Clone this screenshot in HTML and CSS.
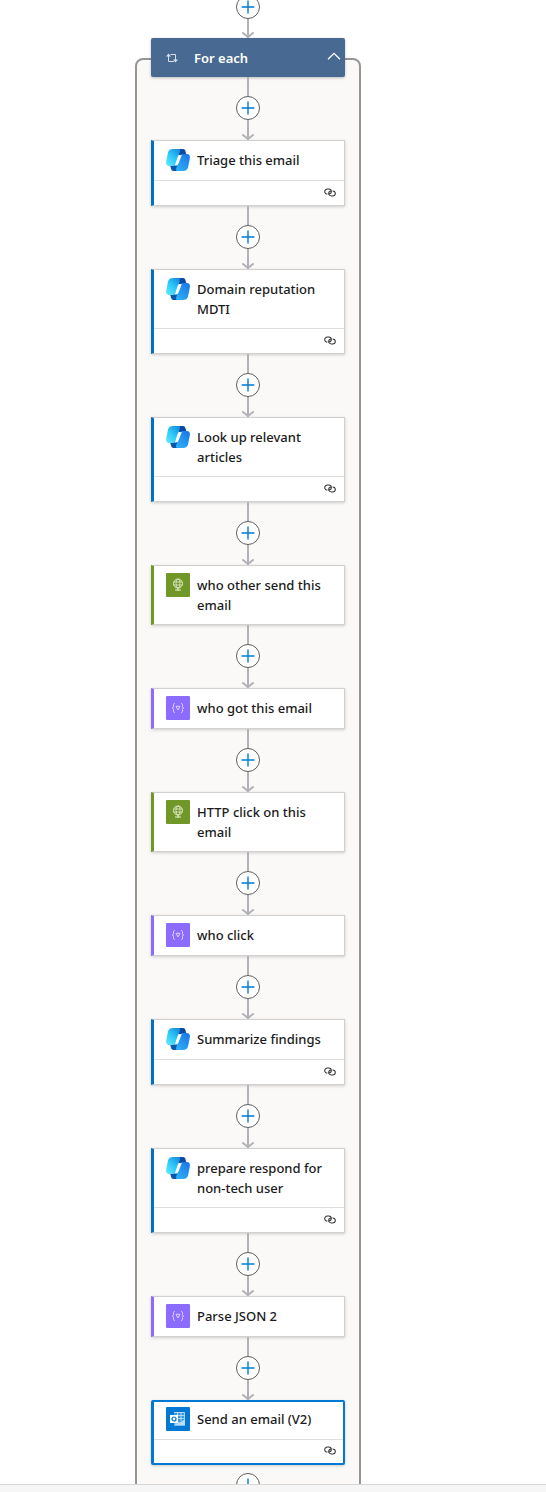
FILE: index.html
```html
<!DOCTYPE html>
<html lang="en">
<head>
<meta charset="utf-8">
<meta name="viewport" content="width=device-width, initial-scale=1">
<title>Workflow designer</title>
<link rel="stylesheet" href="styles.css">
</head>
<body>
<svg class="sprite" aria-hidden="true">
  <defs>
    <linearGradient id="cyan" x1="0" y1="1" x2=".8" y2="0"><stop offset="0" stop-color="#6be8fa"/><stop offset=".5" stop-color="#2fcdf9"/><stop offset="1" stop-color="#1590e0"/></linearGradient>
    <linearGradient id="azure" x1="0" y1="1" x2=".8" y2="0"><stop offset="0" stop-color="#2fb5f8"/><stop offset="1" stop-color="#1b78e8"/></linearGradient>
    <symbol id="plus" viewBox="0 0 24 24"><path d="M12 5v14M5 12h14" stroke="#0078d4" stroke-width="1.5" fill="none"/></symbol>
    <symbol id="arrow" viewBox="0 0 12 6"><path d="M1 1l5 4 5-4" stroke="#b1b1b7" stroke-width="2" fill="none" stroke-linecap="round" stroke-linejoin="round"/></symbol>
    <symbol id="copilot" viewBox="0 0 24 24">
      <path d="M8 1h9c1.400 0 2 .7 2.400 2L20.500 7H13z" fill="#0b48a0"/>
      <path d="M16 23H7.500c-1.400 0-2-.7-2.400-2L4 17h7z" fill="#0b57ab"/>
      <path d="M7 1h5.500c1.400 0 1.700 1 1.400 2.200L10.400 15c-.5 1.800-1.300 3-3.300 3H3C.5 18-.3 16 .2 13.500L2 4.500C2.600 2 4.500 1 7 1z" fill="url(#cyan)"/>
      <path d="M17 23h-5.500c-1.400 0-1.700-1-1.400-2.200L13.600 9c.5-1.800 1.300-3 3.300-3H21c2.500 0 3.300 2 2.800 4.500L22 19.500C21.400 22 19.500 23 17 23z" fill="url(#azure)"/>
      <path d="M15.800 7c-2.600 0-3.900.6-4.500 2.700L8.900 17.500c2.100 0 3.200-.8 3.900-2.800z" fill="#fff"/>
    </symbol>
    <symbol id="http" viewBox="0 0 24 24">
      <rect width="24" height="24" rx="1" fill="#709727"/>
      <g stroke="#e3edcf" fill="none"><circle cx="12" cy="10.500" r="4.500"/><ellipse cx="12" cy="10.500" rx="2" ry="4.500" stroke-width=".8"/><path d="M8 9h8M8 12h8" stroke-width=".8"/><path d="M12 15v3M9 17h6"/></g>
    </symbol>
    <symbol id="json" viewBox="0 0 24 24">
      <rect width="24" height="24" rx="1" fill="#8c6cff"/>
      <path d="M9 7.500c-1.300 0-1.500.5-1.500 1.500v1.500c0 1-.4 1.500-1.200 1.500.8 0 1.200.5 1.200 1.500V15c0 1 .2 1.500 1.500 1.500M15 7.500c1.300 0 1.500.5 1.500 1.500v1.500c0 1 .4 1.500 1.200 1.500-.8 0-1.200.5-1.200 1.500V15c0 1-.2 1.500-1.500 1.500M10 10.300h4L12 14z" stroke="#ddd3ff" fill="none"/>
    </symbol>
    <symbol id="outlook" viewBox="0 0 24 24">
      <rect width="24" height="24" rx="1" fill="#0078d4"/>
      <path d="M8 5h11v10H8z" fill="#3b98e0"/>
      <path d="M8 5.500h10.500V14M8 8.500h10M9 11.500h9M11.500 5v9M15 5v9" stroke="#cbe6fa" stroke-width=".8" fill="none"/>
      <path d="M9 12.500l5 3 5-3V18.500H8z" fill="#8cc8f5"/>
      <path d="M8 18.500l11-6v6z" fill="#b9defa"/>
      <rect x="4" y="8" width="8" height="8" fill="#fff"/><circle cx="8" cy="12" r="2" stroke="#0078d4" stroke-width="1.200" fill="none"/>
    </symbol>
    <symbol id="link" viewBox="0 0 14 10">
      <g stroke="#333" fill="none" stroke-width="1.200"><path d="M4 6.800C2 6.800.8 5.500.8 3.900S2.200 1 4 1h1.500c1.800 0 3 1.200 3 2.800 0 1.700-1.100 2.900-3 3"/><path d="M10 3.200c2 0 3.200 1.300 3.200 2.900S11.800 9 10 9H8.500c-1.800 0-3-1.200-3-2.800 0-1.700 1.100-2.900 3-3"/></g>
    </symbol>
    <symbol id="loop" viewBox="0 0 12 10">
      <path d="M2.500 3v5.500H8M4.500 1.500h5V7" stroke="#d5deea" fill="none"/><path d="M0 3.500L2.500.5 5 3.500zM7 6.500h5L9.500 9.500z" fill="#d5deea"/>
    </symbol>
    <symbol id="chevron" viewBox="0 0 14 8"><path d="M1 7.300l6-6 6 6" stroke="#fff" stroke-width="1.300" fill="none"/></symbol>
  </defs>
</svg>

<div class="designer">
  <main class="canvas">
    <div class="edge edge-entry"><button class="add" aria-label="Insert a new step"><svg><use href="#plus"/></svg></button><svg class="arrow"><use href="#arrow"/></svg></div>
    <section class="scope">
      <header class="scope-header">
        <svg class="scope-icon"><use href="#loop"/></svg>
        <h1 class="scope-title">For each</h1>
        <button class="collapse" aria-label="Collapse"><svg><use href="#chevron"/></svg></button>
      </header>
      <div class="edge"><button class="add" aria-label="Insert a new step"><svg><use href="#plus"/></svg></button><svg class="arrow"><use href="#arrow"/></svg></div>

      <article class="card blue">
        <div class="card-main"><svg class="icon"><use href="#copilot"/></svg><h2 class="title">Triage this email</h2></div>
        <div class="card-foot"><svg class="link"><use href="#link"/></svg></div>
      </article>
      <div class="edge"><button class="add" aria-label="Insert a new step"><svg><use href="#plus"/></svg></button><svg class="arrow"><use href="#arrow"/></svg></div>

      <article class="card blue">
        <div class="card-main"><svg class="icon"><use href="#copilot"/></svg><h2 class="title">Domain reputation MDTI</h2></div>
        <div class="card-foot"><svg class="link"><use href="#link"/></svg></div>
      </article>
      <div class="edge"><button class="add" aria-label="Insert a new step"><svg><use href="#plus"/></svg></button><svg class="arrow"><use href="#arrow"/></svg></div>

      <article class="card blue">
        <div class="card-main"><svg class="icon"><use href="#copilot"/></svg><h2 class="title">Look up relevant articles</h2></div>
        <div class="card-foot"><svg class="link"><use href="#link"/></svg></div>
      </article>
      <div class="edge"><button class="add" aria-label="Insert a new step"><svg><use href="#plus"/></svg></button><svg class="arrow"><use href="#arrow"/></svg></div>

      <article class="card green">
        <div class="card-main"><svg class="icon"><use href="#http"/></svg><h2 class="title">who other send this email</h2></div>
      </article>
      <div class="edge"><button class="add" aria-label="Insert a new step"><svg><use href="#plus"/></svg></button><svg class="arrow"><use href="#arrow"/></svg></div>

      <article class="card purple">
        <div class="card-main"><svg class="icon"><use href="#json"/></svg><h2 class="title">who got this email</h2></div>
      </article>
      <div class="edge"><button class="add" aria-label="Insert a new step"><svg><use href="#plus"/></svg></button><svg class="arrow"><use href="#arrow"/></svg></div>

      <article class="card green">
        <div class="card-main"><svg class="icon"><use href="#http"/></svg><h2 class="title">HTTP click on this email</h2></div>
      </article>
      <div class="edge"><button class="add" aria-label="Insert a new step"><svg><use href="#plus"/></svg></button><svg class="arrow"><use href="#arrow"/></svg></div>

      <article class="card purple">
        <div class="card-main"><svg class="icon"><use href="#json"/></svg><h2 class="title">who click</h2></div>
      </article>
      <div class="edge"><button class="add" aria-label="Insert a new step"><svg><use href="#plus"/></svg></button><svg class="arrow"><use href="#arrow"/></svg></div>

      <article class="card blue">
        <div class="card-main"><svg class="icon"><use href="#copilot"/></svg><h2 class="title">Summarize findings</h2></div>
        <div class="card-foot"><svg class="link"><use href="#link"/></svg></div>
      </article>
      <div class="edge"><button class="add" aria-label="Insert a new step"><svg><use href="#plus"/></svg></button><svg class="arrow"><use href="#arrow"/></svg></div>

      <article class="card blue">
        <div class="card-main"><svg class="icon"><use href="#copilot"/></svg><h2 class="title">prepare respond for non-tech user</h2></div>
        <div class="card-foot"><svg class="link"><use href="#link"/></svg></div>
      </article>
      <div class="edge"><button class="add" aria-label="Insert a new step"><svg><use href="#plus"/></svg></button><svg class="arrow"><use href="#arrow"/></svg></div>

      <article class="card purple">
        <div class="card-main"><svg class="icon"><use href="#json"/></svg><h2 class="title">Parse JSON 2</h2></div>
      </article>
      <div class="edge"><button class="add" aria-label="Insert a new step"><svg><use href="#plus"/></svg></button><svg class="arrow"><use href="#arrow"/></svg></div>

      <article class="card selected">
        <div class="card-main"><svg class="icon"><use href="#outlook"/></svg><h2 class="title">Send an email (V2)</h2></div>
        <div class="card-foot"><svg class="link"><use href="#link"/></svg></div>
      </article>
      <div class="edge edge-exit"><button class="add" aria-label="Insert a new step"><svg><use href="#plus"/></svg></button></div>
    </section>
  </main>
  <footer class="status"></footer>
</div>
</body>
</html>
```
FILE: styles.css
```css
* { box-sizing: border-box; }
body {
  margin: 0;
  background: #fff;
  color: #1b1b1b;
  font-family: "Noto Sans", "Open Sans", sans-serif;
  font-size: 13px;
  line-height: 20px;
}
svg { display: block; }
h1, h2 { margin: 0; font-size: 13px; }
button { padding: 0; border: 0; background: none; cursor: pointer; }
.sprite { position: absolute; width: 0; height: 0; }

.designer { display: flex; flex-direction: column; height: 100vh; }
.canvas { flex: 1; min-height: 0; overflow: hidden; padding: 0 185px 0 135px; }
.status { flex: none; height: 8px; background: #f6f6f6; border-top: 1px solid #d8d8d8; }

.scope {
  margin-top: 20px;
  padding: 0 14px 40px;
  border: 2px solid #979593;
  border-radius: 8px;
  background: #faf9f8;
}
.scope-header {
  display: flex;
  align-items: center;
  height: 39px;
  margin-top: -22px;
  padding: 0 4px 0 15px;
  border-radius: 2px;
  background: #486991;
  color: #fff;
  box-shadow: 0 1px 3px rgba(0, 0, 0, .25);
}
.scope-icon { width: 12px; height: 10px; }
.scope-title { flex: 1; margin-left: 16px; font-weight: 600; }
.collapse svg { width: 14px; height: 8px; margin-bottom: 4px; }

/* Connector between two steps */
.edge {
  display: flex;
  flex-direction: column;
  align-items: center;
  justify-content: space-between;
  height: 63px;
  padding-top: 19px;
  background: linear-gradient(#b1b1b7, #b1b1b7) center / 2px 100% no-repeat;
}
.edge-entry { height: 38px; padding-top: 0; }
.edge-entry .add { margin-top: -5px; }
.edge-exit { height: 32px; padding-top: 8px; background: none; }
.add {
  flex: none;
  width: 24px;
  height: 24px;
  border: 1px solid #605e5c;
  border-radius: 50%;
  background: #fff;
}
.add svg { width: 22px; height: 22px; }
.arrow { flex: none; width: 12px; height: 6px; }

.card {
  border: 1px solid #d2d0ce;
  border-left: 3px solid #0078d4;
  background: #fff;
  box-shadow: 0 1px 3px rgba(0, 0, 0, .18);
}
.blue { border-left-color: #0072c6; }
.green { border-left-color: #709727; }
.purple { border-left-color: #8c6cff; }
.card-main { display: flex; align-items: flex-start; padding: 7px 10px 8px 12px; }
.icon { flex: none; width: 24px; height: 24px; }
.title { flex: 1; margin-left: 7px; padding: 2px 0 1px; font-weight: 500; }
.card-foot {
  display: flex;
  align-items: center;
  justify-content: flex-end;
  height: 25px;
  padding: 0 8px 2px 0;
  border-top: 1px solid #e1dfdd;
}
.link { width: 12px; height: 9px; }
.selected { border: 2px solid #0078d4; border-left-width: 3px; border-radius: 2px; }
.selected .card-main { padding-top: 5px; }
.selected .card-foot { height: 24px; padding-right: 7px; }
```
